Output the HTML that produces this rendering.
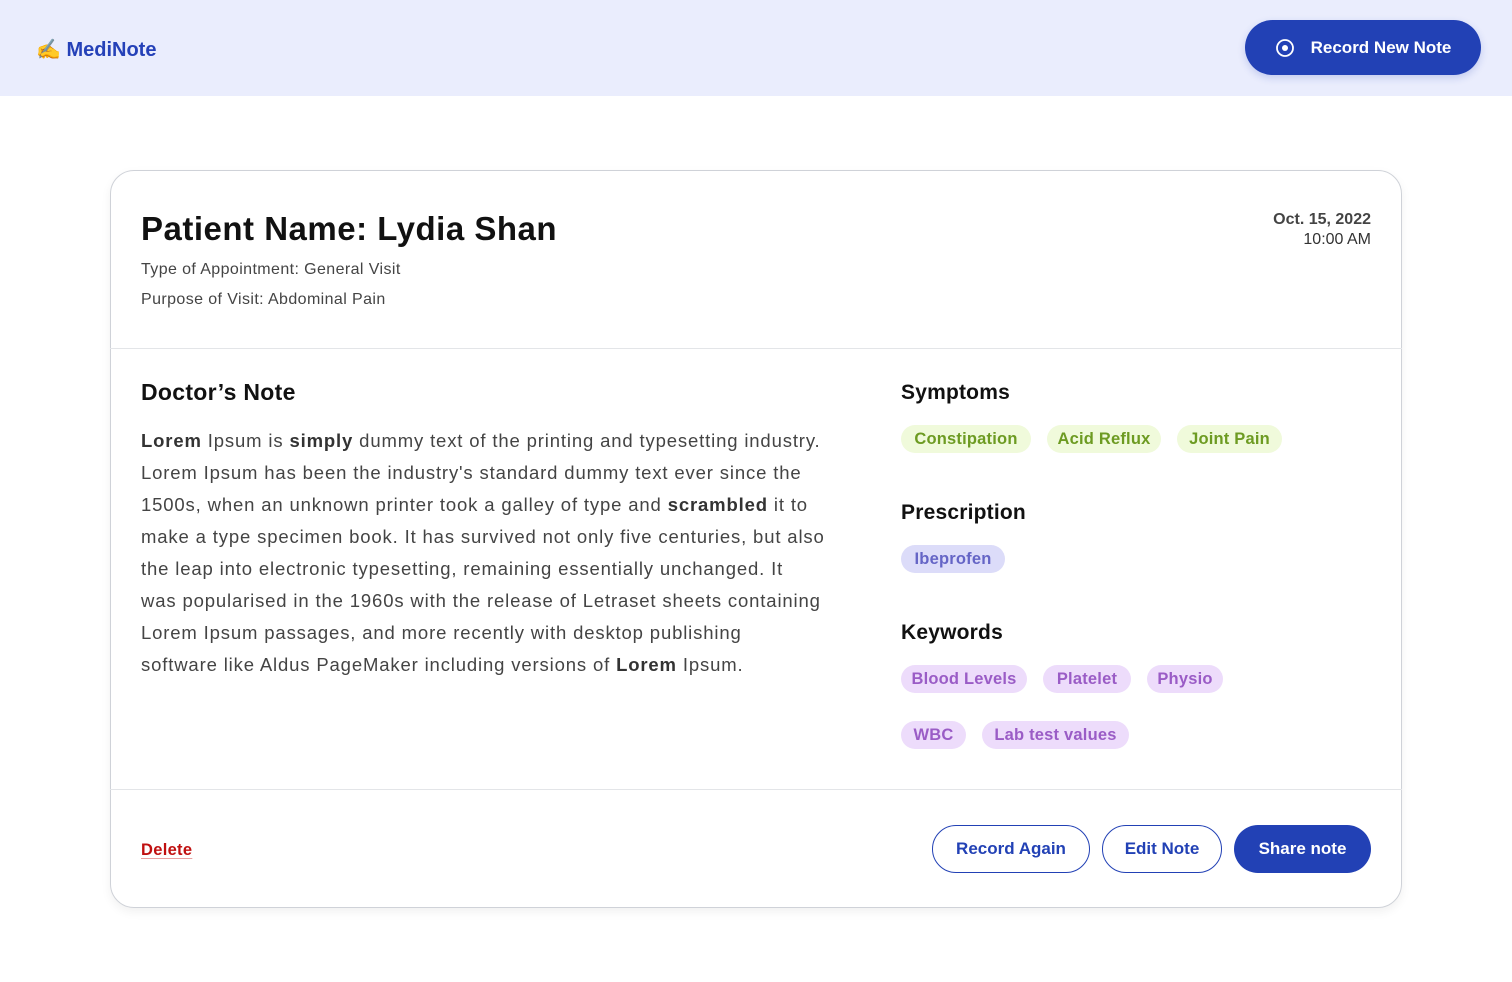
<!DOCTYPE html>
<html><head><meta charset="utf-8"><style>
*{margin:0;padding:0;box-sizing:border-box}
body{width:1512px;height:982px;background:#fff;font-family:"Liberation Sans",sans-serif;position:relative;overflow:hidden;color:#111}
.a{position:absolute;white-space:nowrap}
.hdr{position:absolute;left:0;top:0;width:1512px;height:96px;background:#eaedfd}
.btn{position:absolute;border-radius:28px;display:flex;align-items:center;justify-content:center;font-weight:bold;font-size:17px}
.card{position:absolute;left:110px;top:170px;width:1292px;height:738px;border:1px solid #cfd2d8;border-radius:24px;box-shadow:0 4px 10px rgba(0,0,0,.06)}
.hr{position:absolute;left:110px;width:1292px;height:1px;background:#e3e5e8}
.chip{position:absolute;height:28px;border-radius:14px;font-size:16.5px;font-weight:bold;display:flex;align-items:center;justify-content:center;letter-spacing:.2px}
.g{background:#f0fadb;color:#6d9b22}.p{background:#dcdcf9;color:#6565c6}.k{background:#eddcfb;color:#9a5cc6}
h3{position:absolute;font-size:21px;font-weight:bold;white-space:nowrap}
.para{position:absolute;left:141px;top:425px;font-size:18.5px;line-height:32px;color:#444;white-space:nowrap;letter-spacing:.85px}
.para b{color:#333}
</style></head><body>
<div class="hdr"></div>
<div class="a" style="left:36px;top:37px;font-size:20px;font-weight:bold;color:#2541b8">✍️ MediNote</div>
<div class="btn" style="left:1245px;top:20px;width:236px;height:55px;background:#2241b5;color:#fff;box-shadow:0 3px 8px rgba(34,65,181,.2)">
<svg width="20" height="20" viewBox="0 0 20 20" style="margin-right:16px"><circle cx="10" cy="10" r="8" fill="none" stroke="#fff" stroke-width="1.8"/><circle cx="10" cy="10" r="3" fill="#fff"/></svg>Record New Note</div>
<div class="card"></div>
<div class="a" style="left:141px;top:210px;font-size:33px;font-weight:bold;color:#111;letter-spacing:.5px">Patient Name: Lydia Shan</div>
<div class="a" style="left:141px;top:261px;font-size:16px;color:#444;letter-spacing:.4px">Type of Appointment: General Visit</div>
<div class="a" style="left:141px;top:291px;font-size:16px;color:#444;letter-spacing:.4px">Purpose of Visit: Abdominal Pain</div>
<div class="a" style="right:141px;top:211px;font-size:16px;font-weight:bold;color:#444;text-align:right">Oct. 15, 2022</div>
<div class="a" style="right:141px;top:231px;font-size:16px;color:#333;text-align:right">10:00 AM</div>
<div class="hr" style="top:348px"></div>
<h3 style="left:141px;top:379px;font-size:23px;letter-spacing:.3px">Doctor’s Note</h3>
<div class="para"><b>Lorem</b> Ipsum is <b>simply</b> dummy text of the printing and typesetting industry.<br>Lorem Ipsum has been the industry's standard dummy text ever since the<br>1500s, when an unknown printer took a galley of type and <b>scrambled</b> it to<br>make a type specimen book. It has survived not only five centuries, but also<br>the leap into electronic typesetting, remaining essentially unchanged. It<br>was popularised in the 1960s with the release of Letraset sheets containing<br>Lorem Ipsum passages, and more recently with desktop publishing<br>software like Aldus PageMaker including versions of <b>Lorem</b> Ipsum.</div>
<h3 style="left:901px;top:381px;letter-spacing:.2px">Symptoms</h3>
<div class="chip g" style="left:901px;top:425px;width:130px">Constipation</div>
<div class="chip g" style="left:1047px;top:425px;width:114px">Acid Reflux</div>
<div class="chip g" style="left:1177px;top:425px;width:105px">Joint Pain</div>
<h3 style="left:901px;top:501px;letter-spacing:.2px">Prescription</h3>
<div class="chip p" style="left:901px;top:545px;width:104px">Ibeprofen</div>
<h3 style="left:901px;top:621px;letter-spacing:.2px">Keywords</h3>
<div class="chip k" style="left:901px;top:665px;width:126px">Blood Levels</div>
<div class="chip k" style="left:1043px;top:665px;width:88px">Platelet</div>
<div class="chip k" style="left:1147px;top:665px;width:76px">Physio</div>
<div class="chip k" style="left:901px;top:721px;width:65px">WBC</div>
<div class="chip k" style="left:982px;top:721px;width:147px">Lab test values</div>
<div class="hr" style="top:789px"></div>
<div class="a" style="left:141px;top:841px;font-size:16.5px;font-weight:bold;color:#c01010;text-decoration:underline;text-decoration-color:#e8a0a0;text-underline-offset:3px;letter-spacing:.3px">Delete</div>
<div class="btn" style="left:932px;top:825px;width:158px;height:48px;border:1.5px solid #2241b5;color:#2241b5">Record Again</div>
<div class="btn" style="left:1102px;top:825px;width:120px;height:48px;border:1.5px solid #2241b5;color:#2241b5">Edit Note</div>
<div class="btn" style="left:1234px;top:825px;width:137px;height:48px;background:#2241b5;color:#fff">Share note</div>
</body></html>
